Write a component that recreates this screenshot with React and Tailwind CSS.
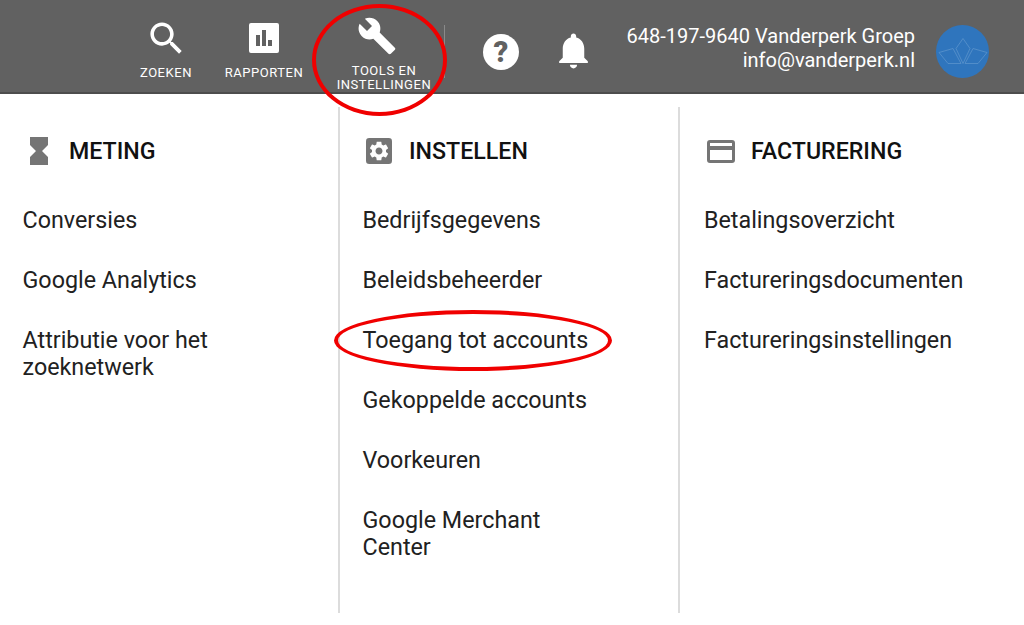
function NavItem({ className, iconClass = '', icon, children }) {
  return (
    <div className={`flex flex-col items-center shrink-0 pt-[16px] ${className}`}>
      <div className={`h-[44px] flex items-center justify-center ${iconClass}`}>{icon}</div>
      <div className="mt-[6px] text-[13px] leading-[14.500px] font-normal text-white text-center tracking-[0.55px]">{children}</div>
    </div>
  );
}

function Column({ className, icon, title, titleClass, items }) {
  return (
    <div className={`h-[506px] ${className}`}>
      <div className={`flex items-center h-[30px] mt-[29px] ${titleClass}`}>
        {icon}
        <h2 className="text-[23.200px] leading-[30px] font-medium text-[#111]">{title}</h2>
      </div>
      <ul className="mt-[41px] flex flex-col gap-[33px]">
        {items.map((item) => (
          <li key={item} className="text-[23.300px] leading-[27px] text-[#212121]">{item}</li>
        ))}
      </ul>
    </div>
  );
}

export default function App() {
  return (
    <div className="relative w-[1024px] h-[625px] overflow-hidden bg-white font-['Roboto',sans-serif]">
      {/* top bar */}
      <header className="h-[94px] bg-[#616161] border-b-2 border-[#4d4d4d] flex items-start">
        <NavItem className="w-[80px] ml-[126px]" icon={
          <svg width="43" height="43" viewBox="0 0 24 24">
            <path fill="white" d="M15.500 14h-.79l-.28-.27C15.410 12.590 16 11.110 16 9.500 16 5.910 13.090 3 9.500 3S3 5.910 3 9.500 5.910 16 9.500 16c1.610 0 3.090-.59 4.230-1.570l.27.28v.79l5 4.990L20.490 19l-4.990-5zm-6 0C7.010 14 5 11.990 5 9.500S7.010 5 9.500 5 14 7.010 14 9.500 11.990 14 9.500 14z" />
          </svg>
        }>ZOEKEN</NavItem>
        <NavItem className="w-[100px] ml-[8px]" icon={
          <svg width="32" height="32" viewBox="0 0 32 32">
            <path fill="white" fillRule="evenodd" d="M3 1h26a2 2 0 0 1 2 2v26a2 2 0 0 1-2 2H3a2 2 0 0 1-2-2V3a2 2 0 0 1 2-2zM8 13v11h4V13zM14 8v16h4V8zM20 18v6h4v-6z" />
          </svg>
        }>RAPPORTEN</NavItem>
        <NavItem className="w-[110px] ml-[15px]" iconClass="mr-[14px] mt-[-2px]" icon={
          <svg width="40" height="40" viewBox="0 0 24 24">
            <path fill="white" d="M22.700 19l-9.100-9.100c.9-2.300.4-5-1.500-6.900-2-2-5-2.400-7.400-1.300L9 6 6 9 1.600 4.700C.4 7.100.9 10.100 2.900 12.100c1.900 1.900 4.600 2.400 6.900 1.500l9.100 9.100c.4.400 1 .4 1.400 0l2.300-2.300c.5-.4.500-1.100.1-1.400z" />
          </svg>
        }><span className="block leading-[14px]">TOOLS EN<br />INSTELLINGEN</span></NavItem>
        <div className="w-px h-[53px] bg-[#8a8a8a] mt-[25px] ml-[5px]" />
        <div className="ml-[38px] mt-[34px] w-[36px] h-[36px] rounded-full bg-white flex items-center justify-center text-[#616161] text-[29px] leading-none font-black">?</div>
        <div className="ml-[33px] mt-[29px]">
          <svg width="43" height="43" viewBox="0 0 24 24">
            <path fill="white" d="M12 22c1.100 0 2-.9 2-2h-4c0 1.100.9 2 2 2zm6-6v-5c0-3.070-1.640-5.640-4.500-6.320V4c0-.83-.67-1.500-1.500-1.500s-1.500.67-1.500 1.500v.68C7.630 5.360 6 7.920 6 11v5l-2 2v1h16v-1l-2-2z" />
          </svg>
        </div>
        <div className="ml-auto mt-[24px] text-right text-white text-[20px] leading-[24px]">
          <div>648-197-9640 Vanderperk Groep</div>
          <div>info@vanderperk.nl</div>
        </div>
        <div className="ml-[21px] mr-[35px] mt-[25px] w-[53px] h-[53px] rounded-full bg-[#2f75bd] flex items-center justify-center shrink-0">
          <svg width="50" height="30" viewBox="0 0 50 30" fill="none" stroke="#5a93cc" strokeWidth="0.8">
            <path d="M25 1.500L32 11.500 25 26.500 18 11.500z" />
            <path d="M1 15.500L15 11.500 23 26.500H10z" />
            <path d="M49 15.500L35 11.500 27 26.500H40z" />
          </svg>
        </div>
      </header>

      {/* menu columns */}
      <main className="flex mt-[13px]">
        <Column
          className="w-[340px] border-r-2 border-[#dcdcdc] pl-[22.500px] pr-[80px]"
          titleClass="pl-[7.500px]"
          title="METING"
          icon={
            <svg className="w-[18px] h-[28px] mr-[21px] shrink-0" viewBox="0 0 18 28">
              <path fill="#757575" d="M0 0h18v8l-6 6 6 6v8H0v-8l6-6-6-6z" />
            </svg>
          }
          items={['Conversies', 'Google Analytics', 'Attributie voor het zoeknetwerk']}
        />
        <Column
          className="w-[340px] border-r-2 border-[#dcdcdc] pl-[22.500px] pr-[80px]"
          titleClass="pl-[3.500px]"
          title="INSTELLEN"
          icon={
            <svg className="w-[26px] h-[26px] mr-[17px] shrink-0" viewBox="0 0 24 24">
              <rect width="24" height="24" rx="3" fill="#757575" />
              <path fill="white" transform="translate(1.200 1.200) scale(0.9)" d="M19.140 12.940c.04-.3.06-.61.06-.94 0-.32-.02-.64-.07-.94l2.030-1.580c.18-.14.23-.41.12-.61l-1.920-3.320c-.12-.22-.37-.29-.59-.22l-2.390.96c-.5-.38-1.030-.7-1.620-.94l-.36-2.540c-.04-.24-.24-.41-.48-.41h-3.840c-.24 0-.43.17-.47.41l-.36 2.540c-.59.24-1.130.57-1.620.94l-2.390-.96c-.22-.08-.47 0-.59.22L2.740 8.870c-.12.21-.08.47.12.61l2.030 1.580c-.05.3-.09.63-.09.94s.02.64.07.94l-2.030 1.580c-.18.14-.23.41-.12.61l1.920 3.320c.12.22.37.29.59.22l2.390-.96c.5.38 1.030.7 1.620.94l.36 2.540c.05.24.24.41.48.41h3.840c.24 0 .44-.17.47-.41l.36-2.540c.59-.24 1.130-.56 1.620-.94l2.390.96c.22.08.47 0 .59-.22l1.920-3.320c.12-.22.07-.47-.12-.61l-2.010-1.580zM12 15.600c-1.980 0-3.600-1.620-3.600-3.600s1.620-3.600 3.600-3.600 3.600 1.620 3.600 3.600-1.620 3.600-3.600 3.600z" />
            </svg>
          }
          items={['Bedrijfsgegevens', 'Beleidsbeheerder', 'Toegang tot accounts', 'Gekoppelde accounts', 'Voorkeuren', 'Google Merchant Center']}
        />
        <Column
          className="flex-1 pl-[24px]"
          titleClass="pl-[3px]"
          title="FACTURERING"
          icon={
            <svg className="w-[28px] h-[23px] mr-[16px] shrink-0" viewBox="0 0 28 23">
              <path fill="#757575" fillRule="evenodd" d="M3 0h22a3 3 0 0 1 3 3v17a3 3 0 0 1-3 3H3a3 3 0 0 1-3-3V3a3 3 0 0 1 3-3zM3 3v3h22V3zM3 10v10h22V10z" />
            </svg>
          }
          items={['Betalingsoverzicht', 'Factureringsdocumenten', 'Factureringsinstellingen']}
        />
      </main>

      {/* red annotations */}
      <div className="absolute left-[312px] top-[4px] w-[135px] h-[112px] rounded-[50%] border-[4px] border-[#f00000]" />
      <div className="absolute left-[334px] top-[310px] w-[278px] h-[61px] rounded-[50%] border-[4px] border-[#f00000]" />
    </div>
  );
}
